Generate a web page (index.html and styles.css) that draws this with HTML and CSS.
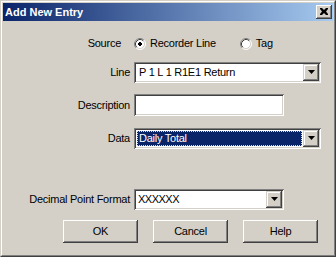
FILE: index.html
```html
<!DOCTYPE html>
<html>
<head>
<meta charset="utf-8">
<link rel="stylesheet" href="styles.css">
</head>
<body>
<div class="window">
  <div class="frame">
    <div class="titlebar">
      <span class="title">Add New Entry</span>
      <span class="close"><svg width="8" height="7" viewBox="0 0 8 7"><path d="M0 0h2l2 2 2-2h2v1L6 3.5 8 6v1H6L4 5 2 7H0V6l2-2.5L0 1z" fill="#000"/></svg></span>
    </div>
    <div class="content">
      <div class="row row-source">
        <span class="label label-source">Source</span>
        <div class="radios">
          <span class="radio"><svg class="radio-icon" width="12" height="12" viewBox="0 0 12 12"><circle cx="6" cy="6" r="5" fill="#fff"/><path d="M2.11 9.89A5.5 5.5 0 0 1 9.89 2.11" fill="none" stroke="#808080"/><path d="M9.89 2.11A5.5 5.5 0 0 1 2.11 9.89" fill="none" stroke="#fff"/><path d="M2.82 9.18A4.5 4.5 0 0 1 9.18 2.82" fill="none" stroke="#404040"/><path d="M9.18 2.82A4.5 4.5 0 0 1 2.82 9.18" fill="none" stroke="#d4d0c8"/><rect x="4" y="5" width="4" height="2" fill="#000"/><rect x="5" y="4" width="2" height="4" fill="#000"/></svg>Recorder Line</span>
          <span class="radio radio-tag"><svg class="radio-icon" width="12" height="12" viewBox="0 0 12 12"><circle cx="6" cy="6" r="5" fill="#fff"/><path d="M2.11 9.89A5.5 5.5 0 0 1 9.89 2.11" fill="none" stroke="#808080"/><path d="M9.89 2.11A5.5 5.5 0 0 1 2.11 9.89" fill="none" stroke="#fff"/><path d="M2.82 9.18A4.5 4.5 0 0 1 9.18 2.82" fill="none" stroke="#404040"/><path d="M9.18 2.82A4.5 4.5 0 0 1 2.82 9.18" fill="none" stroke="#d4d0c8"/></svg>Tag</span>
        </div>
      </div>
      <div class="row row-line">
        <span class="label">Line</span>
        <div class="combo combo-wide">
          <span class="combo-text">P 1 L 1 R1E1 Return</span>
          <span class="arrow"><svg width="7" height="4" viewBox="0 0 7 4"><path d="M0 0h7L3.5 4z" fill="#000"/></svg></span>
        </div>
      </div>
      <div class="row row-desc">
        <span class="label">Description</span>
        <div class="textbox"></div>
      </div>
      <div class="row row-data">
        <span class="label">Data</span>
        <div class="combo combo-wide">
          <span class="combo-text selected">Daily Total</span>
          <span class="arrow"><svg width="7" height="4" viewBox="0 0 7 4"><path d="M0 0h7L3.5 4z" fill="#000"/></svg></span>
        </div>
      </div>
      <div class="row row-dec">
        <span class="label">Decimal Point Format</span>
        <div class="combo combo-narrow">
          <span class="combo-text xs">XXXXXX</span>
          <span class="arrow"><svg width="7" height="4" viewBox="0 0 7 4"><path d="M0 0h7L3.5 4z" fill="#000"/></svg></span>
        </div>
      </div>
      <div class="buttons">
        <span class="button">OK</span>
        <span class="button">Cancel</span>
        <span class="button">Help</span>
      </div>
    </div>
  </div>
</div>
</body>
</html>
```

FILE: styles.css
```css
* { box-sizing: border-box; margin: 0; padding: 0; }
body {
  margin: 0;
  background: #d4d0c8;
  font-family: "Liberation Sans", Arial, sans-serif;
  font-size: 11px;
  color: #000;
}
.window {
  width: 336px;
  height: 257px;
  border: 1px solid;
  border-color: #d4d0c8 #404040 #404040 #d4d0c8;
  background: #d4d0c8;
}
.frame {
  height: 100%;
  border: 1px solid;
  border-color: #fff #808080 #808080 #fff;
  padding: 1px;
  display: flex;
  flex-direction: column;
}
.titlebar {
  height: 18px;
  flex: none;
  background: linear-gradient(to right, #0a246a, #a6caf0);
  display: flex;
  align-items: flex-start;
  justify-content: space-between;
  padding: 0 1px 0 2px;
}
.title {
  color: #fff;
  font-weight: bold;
  line-height: 18px;
}
.close {
  margin-top: 2px;
  width: 16px;
  height: 14px;
  background: #d4d0c8;
  box-shadow: inset -1px -1px #404040, inset 1px 1px #fff, inset -2px -2px #808080, inset 2px 2px #d4d0c8;
  display: flex;
  align-items: center;
  justify-content: center;
  padding: 0 1px 1px 0;
}
.close svg { display: block; }
.content {
  flex: 1;
  display: flex;
  flex-direction: column;
  letter-spacing: -0.25px;
}
.row {
  display: grid;
  grid-template-columns: 127px auto;
  column-gap: 4px;
  align-items: center;
  justify-items: start;
}
.label {
  justify-self: end;
  line-height: 13px;
  white-space: nowrap;
}
.label-source { margin-right: 9px; }
.row-source { margin-top: 16px; height: 12px; }
.row-line { margin-top: 13px; height: 21px; }
.row-desc { margin-top: 11px; height: 22px; }
.row-data { margin-top: 12px; height: 21px; }
.row-dec { margin-top: 40px; height: 21px; }
.radios {
  display: flex;
  align-items: center;
  height: 12px;
}
.radio {
  display: flex;
  align-items: center;
  line-height: 13px;
  white-space: nowrap;
}
.radio-icon { display: block; margin-right: 4px; flex: none; }
.radio-tag { margin-left: 24px; }
.combo, .textbox {
  background: #fff;
  box-shadow: inset 1px 1px #808080, inset -1px -1px #fff, inset 2px 2px #404040, inset -2px -2px #d4d0c8;
  padding: 2px;
  display: flex;
  align-items: stretch;
}
.combo { height: 21px; }
.combo-wide { width: 187px; }
.combo-narrow { width: 150px; }
.textbox { width: 150px; height: 22px; }
.combo-text {
  flex: 1;
  line-height: 15px;
  padding-left: 2px;
  margin: 1px;
  white-space: nowrap;
  overflow: hidden;
}
.combo-text.selected {
  background: #0a246a;
  color: #fff;
  outline: 1px dotted #f5db95;
  outline-offset: -1px;
}
.combo-text.xs { letter-spacing: -0.5px; padding-left: 1px; }
.arrow {
  width: 16px;
  flex: none;
  background: #d4d0c8;
  box-shadow: inset -1px -1px #404040, inset 1px 1px #d4d0c8, inset -2px -2px #808080, inset 2px 2px #fff;
  display: flex;
  align-items: center;
  justify-content: center;
  padding-bottom: 1px;
}
.arrow svg { display: block; }
.buttons {
  margin-top: 10px;
  padding-left: 60px;
  display: flex;
  gap: 15px;
}
.button {
  width: 75px;
  height: 23px;
  display: flex;
  align-items: center;
  justify-content: center;
  background: #d4d0c8;
  box-shadow: inset -1px -1px #404040, inset 1px 1px #fff, inset -2px -2px #808080, inset 2px 2px #d4d0c8;
  line-height: 13px;
}
```
